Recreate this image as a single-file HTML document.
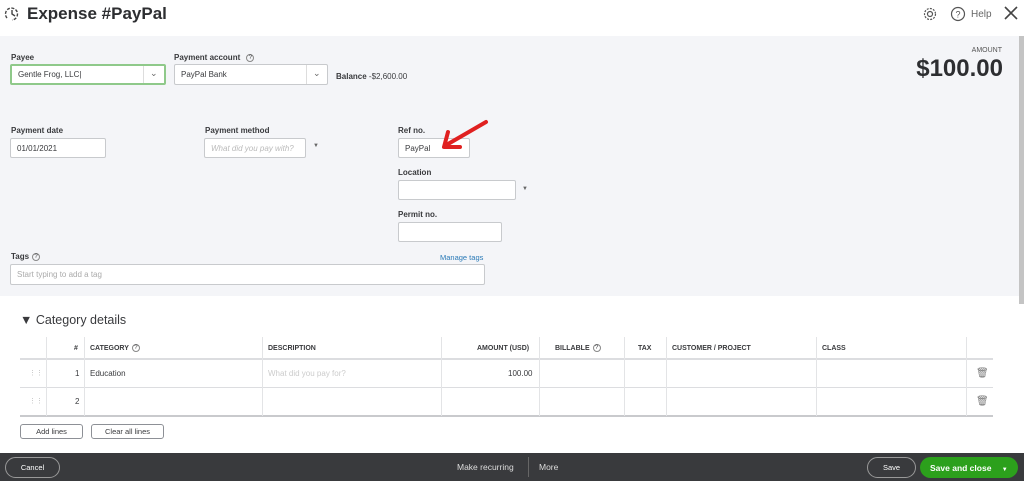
<!DOCTYPE html>
<html><head><style>
*{box-sizing:border-box;margin:0;padding:0}
body{width:1024px;height:481px;overflow:hidden;background:#fff;font-family:"Liberation Sans",sans-serif;color:#393a3d;position:relative}
.a{position:absolute}
.lbl{font-size:8px;font-weight:bold;color:#393a3d}
.inp{position:absolute;background:#fff;border:1px solid #c8cacd;border-radius:2px;font-size:8px;padding-left:6px;display:flex;align-items:center}
.th{position:absolute;top:344px;font-size:7px;font-weight:bold;color:#393a3d;line-height:9px}
.q{display:inline-block;width:8px;height:8px;border:1px solid #888;border-radius:50%;font-size:6px;line-height:6px;text-align:center;font-weight:normal;vertical-align:middle;margin-left:3px}
.vl{position:absolute;top:337px;width:1px;height:79px;background:#e3e4e6}
.btn{position:absolute;border:1px solid #8d9096;border-radius:3px;font-size:7.5px;display:flex;align-items:center;justify-content:center;background:#fff}
</style></head><body>
<svg class="a" style="left:4px;top:6px" width="16" height="16" viewBox="0 0 16 16" fill="none" stroke="#444" stroke-width="1.4"><path d="M3 12A6 6 0 1 1 8 14" stroke-dasharray="3 1.5"/><path d="M8 4v4l3 2"/></svg>
<div class="a" style="left:27px;top:4px;font-size:17px;font-weight:bold;color:#2d2e31">Expense #PayPal</div>
<svg class="a" style="left:922px;top:6px" width="16" height="16" viewBox="0 0 16 16" fill="none" stroke="#555" stroke-width="1.2"><circle cx="8" cy="8" r="2.5"/><circle cx="8" cy="8" r="5.5" stroke-dasharray="2 1.2"/></svg>
<svg class="a" style="left:950px;top:6px" width="16" height="16" viewBox="0 0 16 16" fill="none" stroke="#555" stroke-width="1.2"><circle cx="8" cy="8" r="6.5"/><text x="8" y="11.5" font-size="9" text-anchor="middle" fill="#555" stroke="none" font-family="Liberation Sans">?</text></svg>
<div class="a" style="left:971px;top:9px;font-size:10px;color:#666">Help</div>
<svg class="a" style="left:1003px;top:5px" width="16" height="16" viewBox="0 0 16 16" stroke="#444" stroke-width="1.6"><path d="M2 2L14 14M14 2L2 14"/></svg>

<div class="a" style="left:0;top:36px;width:1019px;height:260px;background:#f4f5f8"></div>
<div class="a" style="left:1019px;top:36px;width:5px;height:268px;background:#c4c4c4"></div>

<div class="a lbl" style="left:11px;top:53px">Payee</div>
<div class="inp" style="left:10px;top:64px;width:156px;height:21px;border:2px solid #8fc98a">Gentle Frog, LLC|</div>
<div class="a" style="left:143px;top:66px;width:1px;height:17px;background:#ddd"></div>
<div class="a" style="left:150px;top:68px;font-size:9px;color:#666">&#8964;</div>
<div class="a lbl" style="left:174px;top:53px">Payment account<span class="q" style="margin-left:6px">?</span></div>
<div class="inp" style="left:174px;top:64px;width:154px;height:21px">PayPal Bank</div>
<div class="a" style="left:306px;top:65px;width:1px;height:19px;background:#ddd"></div>
<div class="a" style="left:313px;top:68px;font-size:9px;color:#666">&#8964;</div>
<div class="a" style="left:336px;top:72px;font-size:8px"><b>Balance</b> -$2,600.00</div>
<div class="a" style="right:22px;top:47px;font-size:7px;color:#555">AMOUNT</div>
<div class="a" style="right:21px;top:55px;font-size:24px;font-weight:bold;color:#2d2e31">$100.00</div>

<div class="a lbl" style="left:11px;top:126px">Payment date</div>
<div class="inp" style="left:10px;top:138px;width:96px;height:20px">01/01/2021</div>
<div class="a lbl" style="left:205px;top:126px">Payment method</div>
<div class="inp" style="left:204px;top:138px;width:102px;height:20px;color:#bbb;font-style:italic">What did you pay with?</div>
<div class="a" style="left:313px;top:143px;font-size:6px;color:#666">&#9660;</div>
<div class="a lbl" style="left:398px;top:126px">Ref no.</div>
<div class="inp" style="left:398px;top:138px;width:72px;height:20px">PayPal</div>
<svg class="a" style="left:436px;top:118px" width="55" height="35" viewBox="0 0 55 35"><path d="M50 4L12 26" stroke="#e02020" stroke-width="4" stroke-linecap="round"/><path d="M8 29L12 14M8 29L24 29" stroke="#e02020" stroke-width="4" stroke-linecap="round"/></svg>
<div class="a lbl" style="left:398px;top:168px">Location</div>
<div class="inp" style="left:398px;top:180px;width:118px;height:20px"></div>
<div class="a" style="left:522px;top:186px;font-size:6px;color:#666">&#9660;</div>
<div class="a lbl" style="left:398px;top:210px">Permit no.</div>
<div class="inp" style="left:398px;top:222px;width:104px;height:20px"></div>
<div class="a lbl" style="left:11px;top:252px">Tags<span class="q">?</span></div>
<div class="a" style="left:440px;top:253px;font-size:7.5px;color:#2a7ab7">Manage tags</div>
<div class="inp" style="left:10px;top:264px;width:475px;height:21px;color:#aaa">Start typing to add a tag</div>

<div class="a" style="left:20px;top:313px;font-size:12.5px;color:#393a3d">&#9660; Category details</div>
<div class="th" style="left:74px">#</div>
<div class="th" style="left:90px">CATEGORY<span class="q">?</span></div>
<div class="th" style="left:268px">DESCRIPTION</div>
<div class="th" style="left:477px">AMOUNT (USD)</div>
<div class="th" style="left:555px">BILLABLE<span class="q">?</span></div>
<div class="th" style="left:638px">TAX</div>
<div class="th" style="left:672px">CUSTOMER / PROJECT</div>
<div class="th" style="left:822px">CLASS</div>
<div class="a" style="left:20px;top:358px;width:973px;height:2px;background:#dcdde0"></div>
<div class="a" style="left:20px;top:387px;width:973px;height:1px;background:#dcdde0"></div>
<div class="a" style="left:20px;top:415px;width:973px;height:2px;background:#c9cacd"></div>
<div class="vl" style="left:46px"></div><div class="vl" style="left:84px"></div><div class="vl" style="left:262px"></div><div class="vl" style="left:441px"></div><div class="vl" style="left:539px"></div><div class="vl" style="left:624px"></div><div class="vl" style="left:666px"></div><div class="vl" style="left:816px"></div><div class="vl" style="left:966px"></div>
<div class="a" style="left:29px;top:369px;font-size:7px;color:#bbb">&#8942;&#8942;</div>
<div class="a" style="left:29px;top:397px;font-size:7px;color:#bbb">&#8942;&#8942;</div>
<div class="a" style="left:75px;top:369px;font-size:8px">1</div>
<div class="a" style="left:90px;top:369px;font-size:8px">Education</div>
<div class="a" style="left:268px;top:369px;font-size:8px;color:#ccc">What did you pay for?</div>
<div class="a" style="left:508px;top:369px;font-size:8px">100.00</div>
<div class="a" style="left:75px;top:397px;font-size:8px">2</div>
<div class="a" style="left:976px;top:368px;font-size:10px;color:#777">&#128465;</div>
<div class="a" style="left:976px;top:396px;font-size:10px;color:#777">&#128465;</div>
<div class="btn" style="left:20px;top:424px;width:63px;height:15px">Add lines</div>
<div class="btn" style="left:91px;top:424px;width:73px;height:15px">Clear all lines</div>

<div class="a" style="left:0;top:453px;width:1024px;height:28px;background:#393a3d"></div>
<div class="btn" style="left:5px;top:457px;width:55px;height:21px;background:transparent;border-color:#999;color:#fff;border-radius:11px">Cancel</div>
<div class="a" style="left:457px;top:462px;font-size:8.5px;color:#ddd">Make recurring</div>
<div class="a" style="left:528px;top:457px;width:1px;height:20px;background:#666"></div>
<div class="a" style="left:539px;top:462px;font-size:8.5px;color:#ddd">More</div>
<div class="btn" style="left:867px;top:457px;width:49px;height:21px;background:transparent;border-color:#999;color:#fff;border-radius:11px">Save</div>
<div class="a" style="left:920px;top:457px;width:98px;height:21px;background:#2ca01c;border-radius:11px;color:#fff;font-size:8.5px;font-weight:bold;padding:6px 0 0 10px">Save and close <span style="margin-left:8px;font-size:6px">&#9660;</span></div>
</body></html>
